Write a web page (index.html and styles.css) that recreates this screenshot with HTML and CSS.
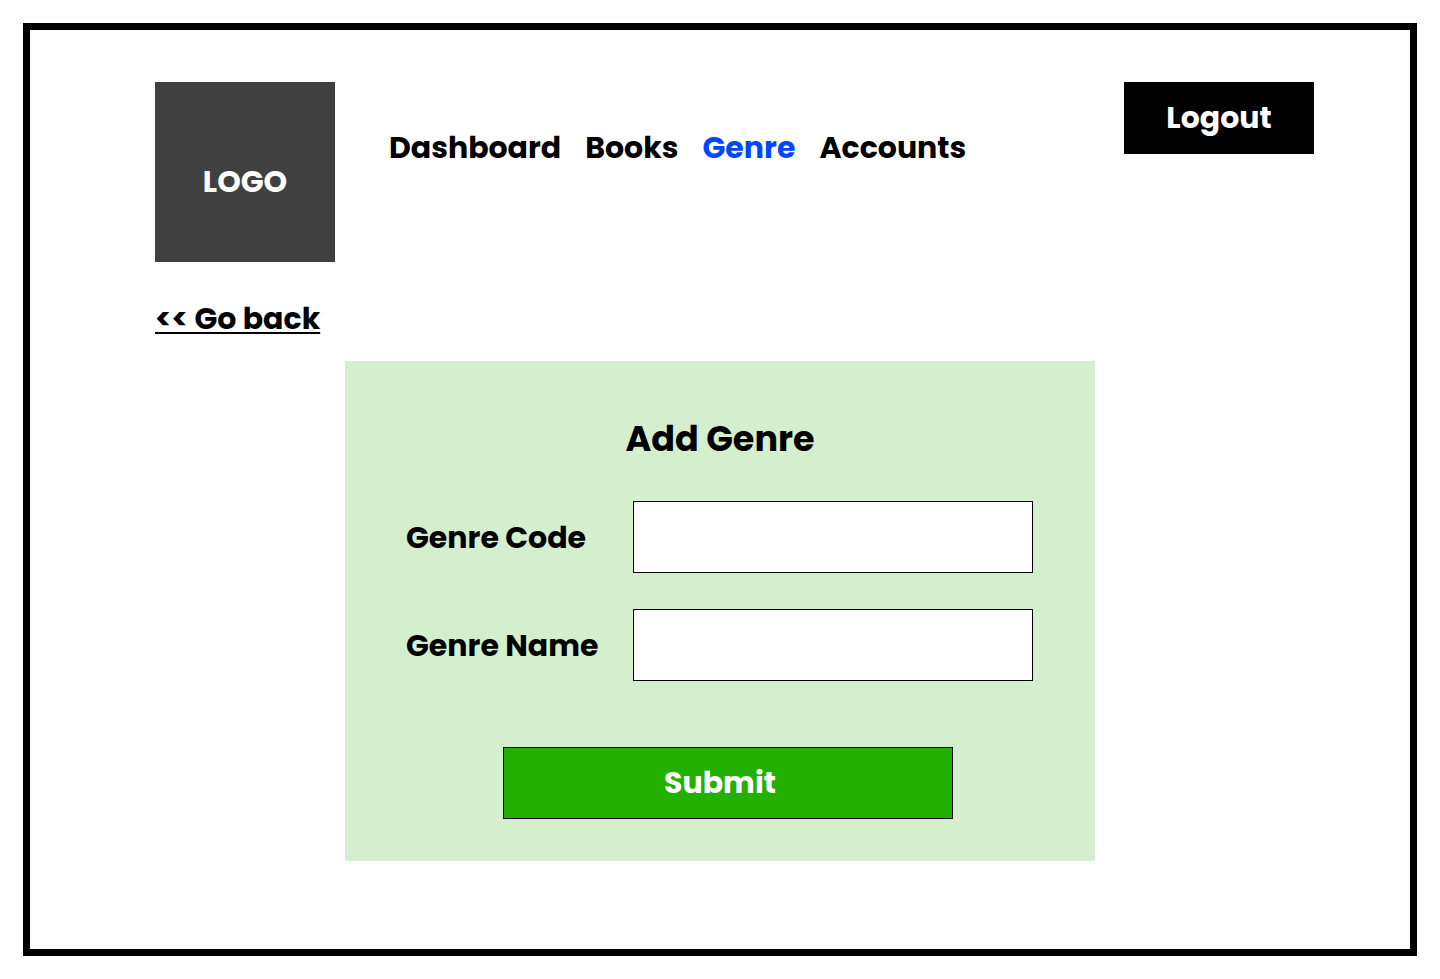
FILE: index.html
```html
<!DOCTYPE html>
<html lang="en">
<head>
<meta charset="utf-8">
<meta name="viewport" content="width=device-width, initial-scale=1">
<title>Add Genre</title>
<link rel="stylesheet" href="styles.css">
</head>
<body>
<div class="frame">
  <header class="header">
    <div class="logo">LOGO</div>
    <nav class="nav">
      <a class="nav-link" href="#">Dashboard</a>
      <a class="nav-link" href="#">Books</a>
      <a class="nav-link nav-link-active" href="#" aria-current="page">Genre</a>
      <a class="nav-link" href="#">Accounts</a>
    </nav>
    <button class="logout" type="button">Logout</button>
  </header>
  <main class="main">
    <a class="back" href="#">&lt;&lt; Go back</a>
    <form class="card">
      <h1 class="title">Add Genre</h1>
      <div class="fields">
        <label class="label" for="code">Genre Code</label>
        <input class="input" id="code" name="code" type="text">
        <label class="label" for="name">Genre Name</label>
        <input class="input" id="name" name="name" type="text">
      </div>
      <button class="submit" type="submit">Submit</button>
    </form>
  </main>
</div>
</body>
</html>
```

FILE: styles.css
```css
* {
  box-sizing: border-box;
}

body {
  margin: 0;
  padding: 23px;
  min-height: 100vh;
  display: flex;
  background: #fff;
  color: #000;
  font-family: Poppins, Inter, sans-serif;
  font-size: 30px;
  font-weight: 700;
  line-height: 44px;
}

button,
input {
  font: inherit;
}

.frame {
  flex: 1;
  border: 7px solid #000;
  padding: 52px 0;
}

.header {
  display: flex;
  align-items: flex-start;
  padding: 0 96px 0 125px;
}

.logo {
  width: 180px;
  height: 180px;
  padding-top: 20px;
  display: flex;
  align-items: center;
  justify-content: center;
  background: #404040;
  color: #fff;
}

.nav {
  flex: 1;
  display: flex;
  gap: 24px;
  padding: 44px 0 0 54px;
}

.nav-link {
  color: #000;
  text-decoration: none;
}

.nav-link-active {
  color: #0047ff;
}

.logout {
  width: 190px;
  height: 72px;
  padding: 0;
  border: 0;
  background: #000;
  color: #fff;
}

.main {
  display: flex;
  flex-direction: column;
}

.back {
  align-self: flex-start;
  margin: 35px 0 20px 125px;
  color: #000;
  text-decoration-thickness: 2px;
  text-underline-offset: 3px;
}

.card {
  align-self: center;
  width: 750px;
  max-width: 100%;
  padding: 56px 60px 42px;
  background: #d4efcd;
}

.title {
  margin: 0 0 40px;
  font-size: 35px;
  font-weight: 700;
  line-height: 44px;
  text-align: center;
}

.fields {
  display: grid;
  grid-template-columns: 228px 400px;
  row-gap: 36px;
  align-items: center;
}

.label {
  padding: 2px 0 0 1px;
}

.input {
  width: 100%;
  height: 72px;
  padding: 0 16px;
  border: 1px solid #000;
  border-radius: 0;
  background: #fff;
}

.submit {
  display: block;
  width: 450px;
  height: 72px;
  margin: 66px 0 0 98px;
  padding: 0 16px 0 0;
  border: 1px solid #000;
  background: #24b000;
  color: #fff;
}
```
